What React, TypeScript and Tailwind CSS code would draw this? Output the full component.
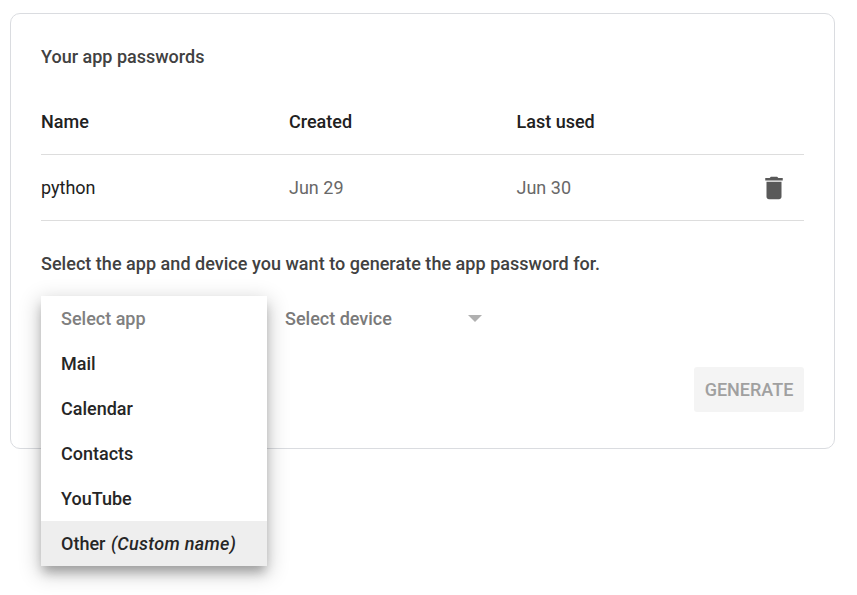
const options = ['Mail', 'Calendar', 'Contacts', 'YouTube'];

export default function App() {
  return (
    <div className="h-[595px] overflow-hidden bg-white pl-[10px] pt-[13px] font-['Roboto',sans-serif] text-[18px] leading-[27px] text-[#212121]">
      <section className="h-[436px] w-[825px] rounded-[10px] border border-[#dadce0] px-[30px] pt-[29px]">
        <h2 className="font-medium text-[#414141]">Your app passwords</h2>
        <div className="mt-[19px] grid h-[66px] grid-cols-[248px_227.5px_1fr] items-center border-b border-[#dddddd] font-medium">
          <span>Name</span>
          <span>Created</span>
          <span>Last used</span>
        </div>
        <div className="grid h-[66px] grid-cols-[248px_227.5px_1fr_60px] items-center border-b border-[#dddddd]">
          <span>python</span>
          <span className="text-[#686868]">Jun 29</span>
          <span className="text-[#686868]">Jun 30</span>
          <svg className="ml-[15px] h-[30px] w-[30px]" viewBox="0 0 24 24" fill="#595959">
            <path d="M6 19c0 1.1.9 2 2 2h8c1.1 0 2-.9 2-2V7H6v12zM19 4h-3.5l-1-1h-5l-1 1H5v2h14V4z" />
          </svg>
        </div>
        <p className="mt-[29px] font-medium tracking-[0.03px] text-[#414141]">
          Select the app and device you want to generate the app password for.
        </p>
        <div className="mt-[19px] flex items-start">
          <div className="relative h-[45px] w-[226px]">
            <ul className="absolute left-0 top-0 w-[226px] bg-white font-medium shadow-[0_6px_20px_2px_rgba(0,0,0,0.2),0_8px_10px_-2px_rgba(0,0,0,0.26)]">
              <li className="flex h-[45px] items-center px-5 text-[#808080]">Select app</li>
              {options.map((o) => (
                <li key={o} className="flex h-[45px] items-center px-5 text-[#262626]">{o}</li>
              ))}
              <li className="flex h-[45px] items-center bg-[#eeeeee] px-5 text-[#262626]">
                Other&nbsp;<em className="ml-[1px] tracking-[0.32px]">(Custom name)</em>
              </li>
            </ul>
          </div>
          <div className="ml-[18px] flex h-[45px] w-[197px] items-center justify-between font-medium text-[#7a7a7a]">
            Select device
            <span className="border-x-[7px] border-t-[7px] border-x-transparent border-t-[#b0b0b0]" />
          </div>
        </div>
        <button className="ml-auto mt-[26px] block h-[45px] w-[110px] rounded-[3px] bg-[#f4f4f4] font-medium text-[#a0a0a0]">
          GENERATE
        </button>
      </section>
    </div>
  );
}
